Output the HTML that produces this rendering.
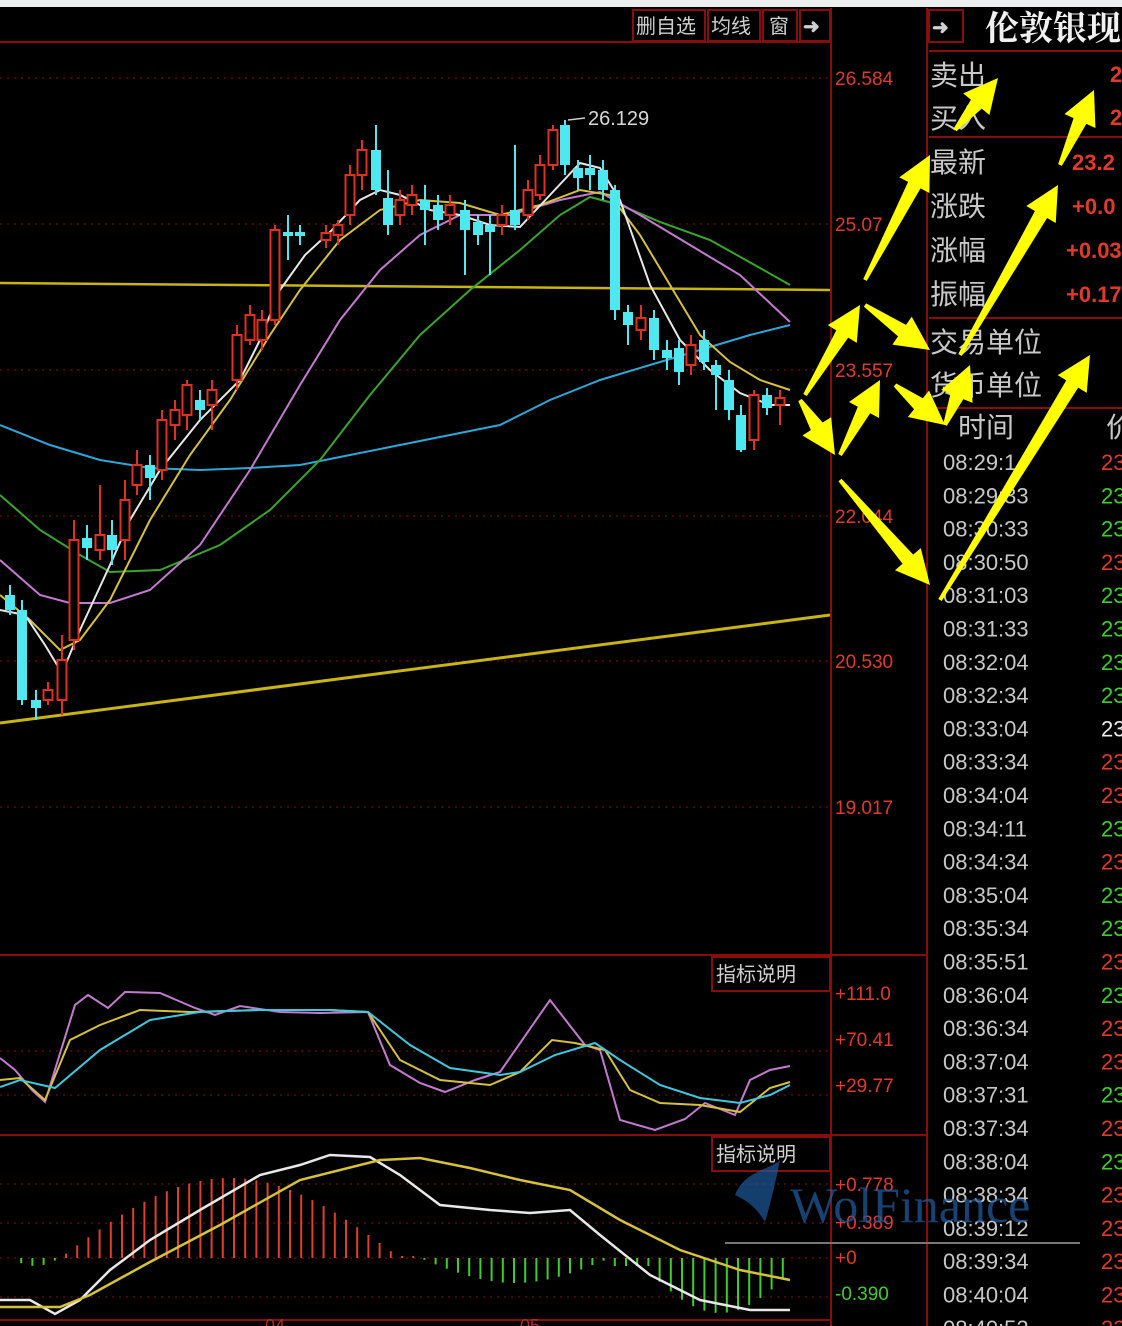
<!DOCTYPE html>
<html><head><meta charset="utf-8"><style>
body{margin:0;width:1122px;height:1326px;background:#000;overflow:hidden;font-family:"Liberation Sans","Noto Sans CJK SC",sans-serif}
svg{position:absolute;left:0;top:0}
</style></head><body>
<svg width="1122" height="1326" viewBox="0 0 1122 1326" xmlns="http://www.w3.org/2000/svg" font-family="Liberation Sans, Noto Sans CJK SC, sans-serif">
<rect x="0" y="0" width="1122" height="1326" fill="#000"/>
<rect x="0" y="0" width="1122" height="7" fill="#eceef0"/>
<g stroke="#8a0d0d" stroke-width="2" fill="none">
<line x1="0" y1="42" x2="830" y2="42"/>
<line x1="831" y1="8" x2="831" y2="1326"/>
<line x1="927" y1="8" x2="927" y2="1326"/>
<line x1="0" y1="955" x2="927" y2="955"/>
<line x1="0" y1="1135" x2="927" y2="1135"/>
<line x1="0" y1="1320" x2="831" y2="1320"/>
<rect x="633" y="10" width="72" height="31"/>
<rect x="708" y="10" width="52" height="31"/>
<rect x="763" y="10" width="34" height="31"/>
<rect x="800" y="10" width="30" height="31"/>
<rect x="712" y="957" width="118" height="34"/>
<rect x="712" y="1137" width="118" height="34"/>
<rect x="929" y="10" width="34" height="32"/>
<line x1="929" y1="51" x2="1122" y2="51"/>
<line x1="929" y1="137" x2="1122" y2="137"/>
<line x1="929" y1="318" x2="1122" y2="318"/>
<line x1="929" y1="408" x2="1122" y2="408"/>
</g>
<g stroke="#5a0a0a" stroke-width="1.5" stroke-dasharray="2,5">
<line x1="0" y1="78" x2="830" y2="78"/><line x1="0" y1="224" x2="830" y2="224"/>
<line x1="0" y1="370" x2="830" y2="370"/><line x1="0" y1="516" x2="830" y2="516"/>
<line x1="0" y1="661" x2="830" y2="661"/><line x1="0" y1="807" x2="830" y2="807"/>
<line x1="0" y1="1051" x2="830" y2="1051"/><line x1="0" y1="1095" x2="830" y2="1095"/>
<line x1="0" y1="1184" x2="830" y2="1184"/><line x1="0" y1="1223" x2="830" y2="1223"/>
<line x1="0" y1="1258" x2="830" y2="1258"/><line x1="0" y1="1297" x2="830" y2="1297"/>
</g>
<g fill="#d0d0d0" font-size="20">
<text x="636" y="33">删自选</text><text x="711" y="33">均线</text><text x="769" y="33">窗</text>
<text x="803" y="33" font-weight="bold">➜</text><text x="932" y="34" font-weight="bold">➜</text>
<text x="716" y="981">指标说明</text><text x="716" y="1161">指标说明</text>
</g>
<g fill="#e23a2a" font-size="19">
<text x="835" y="85">26.584</text><text x="835" y="231">25.07</text><text x="835" y="377">23.557</text>
<text x="835" y="523">22.044</text><text x="835" y="668">20.530</text><text x="835" y="814">19.017</text>
<text x="835" y="1000">+111.0</text><text x="835" y="1046">+70.41</text><text x="835" y="1092">+29.77</text>
<text x="835" y="1191">+0.778</text><text x="835" y="1229">+0.389</text><text x="835" y="1264">+0</text>
<text x="835" y="1300" fill="#3ecf2a">-0.390</text>
</g>
<line x1="0" y1="283" x2="830" y2="290" stroke="#c8b414" stroke-width="2.5"/>
<line x1="0" y1="723" x2="830" y2="615" stroke="#c8b414" stroke-width="3"/>
<g fill="none" stroke-width="2">
<polyline stroke="#2fa7d6" points="0,425 50,445 100,460 150,468 200,470 250,468 300,465 350,455 400,445 450,435 500,425 550,400 600,380 650,365 700,350 750,335 790,325"/>
<polyline stroke="#3aa52a" points="0,495 40,530 80,555 110,572 160,570 220,545 270,510 320,460 370,395 420,335 470,290 520,250 560,215 590,197 620,205 660,222 710,240 760,268 790,285"/>
<polyline stroke="#c47ad0" points="0,560 40,595 70,603 110,603 150,590 200,545 250,470 300,385 340,320 380,270 420,235 460,215 510,215 560,200 600,192 640,215 690,245 740,275 790,322"/>
<polyline stroke="#d6c23a" points="0,595 30,620 60,650 80,640 110,600 150,520 190,455 230,400 270,335 300,290 340,240 380,210 420,200 460,203 500,215 540,205 580,190 610,195 640,235 670,285 700,335 730,362 760,380 790,390"/>
<polyline stroke="#e8e8e8" points="0,610 25,615 45,645 62,673 80,630 110,565 130,520 160,470 200,420 240,380 260,340 280,290 305,255 330,232 360,200 380,190 400,195 430,210 460,215 490,225 520,227 550,195 580,163 600,168 620,200 650,285 680,340 710,370 740,393 770,405 790,405"/>
</g>
<g id="candles"></g>
<g fill="none" stroke-width="2">
<polyline stroke="#c47ad0" points="0,1058 15,1070 32,1090 45,1102 75,1005 88,995 108,1008 125,992 160,993 195,1008 215,1015 240,1006 280,1012 320,1013 368,1012 390,1065 420,1083 445,1092 475,1080 500,1072 550,1000 585,1045 600,1050 620,1120 655,1130 685,1119 705,1103 735,1115 750,1080 770,1070 790,1066"/>
<polyline stroke="#d6c23a" points="0,1080 20,1078 45,1100 70,1040 100,1025 140,1010 190,1012 260,1010 330,1010 368,1012 400,1060 440,1080 490,1085 520,1072 552,1040 575,1043 605,1050 630,1090 660,1103 700,1105 740,1112 770,1088 790,1082"/>
<polyline stroke="#3ec8e0" points="0,1087 20,1080 55,1088 100,1050 150,1020 200,1012 260,1010 330,1010 368,1012 410,1045 450,1068 500,1075 520,1072 555,1055 595,1043 620,1060 660,1085 700,1098 740,1103 770,1095 790,1085"/>
</g>
<g id="macd" stroke-width="2"></g>
<g fill="none" stroke-width="2.5">
<polyline stroke="#e8e8e8" points="0,1300 30,1300 55,1314 80,1300 110,1270 150,1240 200,1210 260,1175 300,1165 330,1155 370,1157 400,1175 440,1205 490,1210 530,1213 570,1210 600,1235 650,1275 700,1300 750,1310 790,1310"/>
<polyline stroke="#d6c23a" points="0,1307 60,1307 90,1295 150,1262 220,1225 300,1180 380,1160 420,1158 470,1168 520,1180 570,1190 620,1220 680,1250 740,1270 790,1280"/>
</g>
<text x="265" y="1332" fill="#b02a2a" font-size="18">04</text>
<text x="520" y="1332" fill="#b02a2a" font-size="18">05</text>
<text x="985" y="40" fill="#f0f0f0" font-size="34" font-weight="bold" font-family="Noto Serif CJK SC, serif">伦敦银现</text>
<g fill="#c8c8c8" font-size="28">
<text x="930" y="85">卖出</text><text x="930" y="128">买入</text><text x="930" y="172">最新</text>
<text x="930" y="216">涨跌</text><text x="930" y="260">涨幅</text><text x="930" y="304">振幅</text>
<text x="930" y="352">交易单位</text><text x="930" y="395">货币单位</text><text x="958" y="437">时间</text>
<text x="1106" y="437">价</text>
</g>
<g fill="#e23a2a" font-size="22" font-weight="bold">
<text x="1110" y="82">2</text><text x="1110" y="125">2</text><text x="1072" y="170">23.2</text>
<text x="1072" y="214">+0.0</text><text x="1066" y="258">+0.03</text><text x="1066" y="302">+0.17</text>
</g>
<g id="times" font-size="22" fill="#c8c8c8"></g>
<text x="790" y="1222" fill="#1d5a9a" fill-opacity="0.75" font-size="50" font-family="Liberation Serif, serif">WolFinance</text>
<path d="M735,1195 C745,1170 770,1170 780,1160 C775,1185 770,1205 765,1222 C755,1205 745,1200 735,1195Z" fill="#1d5a9a" fill-opacity="0.7"/>
<line x1="725" y1="1243" x2="1080" y2="1243" stroke="#777" stroke-width="2"/>
<g id="arrows" fill="#ffff00"></g>
</svg>
<script>
var NS="http://www.w3.org/2000/svg";
function el(p,t,a){var e=document.createElementNS(NS,t);for(var k in a)e.setAttribute(k,a[k]);p.appendChild(e);return e;}
var c=[[10,'c',595,610,585,615],[22,'c',610,700,600,705],[36,'c',700,708,690,720],[48,'r',690,700,682,705],[62,'r',660,700,635,715],[74,'r',540,640,520,650],[87,'c',538,548,525,560],[100,'r',535,550,485,560],[112,'c',535,550,520,565],[125,'r',500,540,480,560],[137,'r',465,485,450,495],[150,'c',465,478,455,500],[162,'r',420,470,410,480],[175,'r',410,425,400,440],[187,'r',385,415,380,430],[200,'c',400,410,390,420],[212,'r',390,405,380,430],[237,'r',335,380,325,390],[250,'r',315,340,305,345],[262,'r',320,340,310,350],[275,'r',230,320,225,325],[288,'c',232,236,215,260],[300,'c',232,236,225,245],[326,'r',233,240,225,248],[338,'r',225,235,220,245],[350,'r',175,215,165,225],[362,'r',150,175,140,190],[376,'c',150,190,125,195],[388,'c',198,225,170,235],[400,'r',200,215,190,225],[412,'r',195,205,185,215],[425,'c',200,210,185,245],[438,'c',205,220,195,230],[450,'r',205,215,195,225],[465,'c',210,230,200,275],[478,'c',222,235,215,245],[490,'c',225,232,215,275],[502,'r',215,225,205,235],[515,'c',210,225,145,230],[528,'r',190,215,180,220],[540,'r',165,195,155,200],[553,'r',130,165,125,170],[565,'c',125,165,120,175],[578,'c',168,178,160,190],[590,'c',168,175,155,190],[603,'c',170,190,160,200],[615,'c',190,310,185,320],[628,'c',312,325,305,345],[641,'r',318,330,305,340],[654,'c',318,350,310,360],[667,'c',350,358,340,370],[679,'c',348,372,340,385],[691,'r',345,365,335,375],[704,'c',340,362,330,370],[716,'c',365,375,360,410],[729,'c',380,410,370,420],[741,'c',415,450,405,452],[754,'r',395,440,390,450],[767,'c',395,408,388,415],[780,'r',398,405,390,425]];
var g=document.getElementById('candles');
c.forEach(function(d){var col=d[1]=='c'?'#4fe8f0':'#e0301e';
el(g,'line',{x1:d[0],x2:d[0],y1:d[4],y2:d[5],stroke:col,'stroke-width':2});
if(d[1]=='c')el(g,'rect',{x:d[0]-5,y:d[2],width:10,height:Math.max(3,d[3]-d[2]),fill:col});
else el(g,'rect',{x:d[0]-4.5,y:d[2],width:9,height:Math.max(3,d[3]-d[2]),fill:'#000',stroke:col,'stroke-width':2});});
el(g,'line',{x1:568,y1:120,x2:585,y2:118,stroke:'#ccc','stroke-width':1.5});
var t=el(g,'text',{x:588,y:125,fill:'#d8d8d8','font-size':20});t.textContent='26.129';
var m=document.getElementById('macd');
for(var x=10;x<=792;x+=11.2){var h;var z=1258;
if(x<60){h=-8*Math.sin((x-10)/50*Math.PI);} else if(x<400){h=80*Math.sin((x-60)/340*Math.PI);} else if(x<420){h=2;}
else if(x<610){h=-25*Math.sin((x-420)/190*Math.PI);} else if(x<650){h=-8;} else {h=-50*Math.sin((x-640)/160*Math.PI)-5;}
el(m,'line',{x1:x,x2:x,y1:z,y2:z-h,stroke:h>0?'#e0402a':'#3ecf2a'});}
var times=['08:29:1','08:29:33','08:30:33','08:30:50','08:31:03','08:31:33','08:32:04','08:32:34','08:33:04','08:33:34','08:34:04','08:34:11','08:34:34','08:35:04','08:35:34','08:35:51','08:36:04','08:36:34','08:37:04','08:37:31','08:37:34','08:38:04','08:38:34','08:39:12','08:39:34','08:40:04','08:40:52'];
var cols='rggrggggwrrgrggrgrrgrgrrrrr';
var tg=document.getElementById('times');
times.forEach(function(s,i){var y=470+i*33.3;var a=el(tg,'text',{x:943,y:y});a.textContent=s;
var b=el(tg,'text',{x:1101,y:y,fill:cols[i]=='r'?'#e23a2a':cols[i]=='g'?'#3ecf2a':'#eee'});b.textContent='23';});
var ar=[[865,280,65,-125],[805,395,55,-90],[865,305,65,45],[800,400,35,55],[840,455,40,-75],[895,385,50,40],[945,425,25,-60],[960,355,98,-170],[940,600,150,-245],[840,480,90,105],[955,130,43,-52],[1060,165,34,-75]];
var ag=document.getElementById('arrows');
ar.forEach(function(a){var L=Math.hypot(a[2],a[3]),an=Math.atan2(a[3],a[2])*180/Math.PI,h=L-34;
el(ag,'polygon',{points:'0,-2 '+h+',-7 '+h+',-17 '+L+',0 '+h+',17 '+h+',7 0,2',transform:'translate('+a[0]+','+a[1]+') rotate('+an+')'});});
</script>
</body></html>
